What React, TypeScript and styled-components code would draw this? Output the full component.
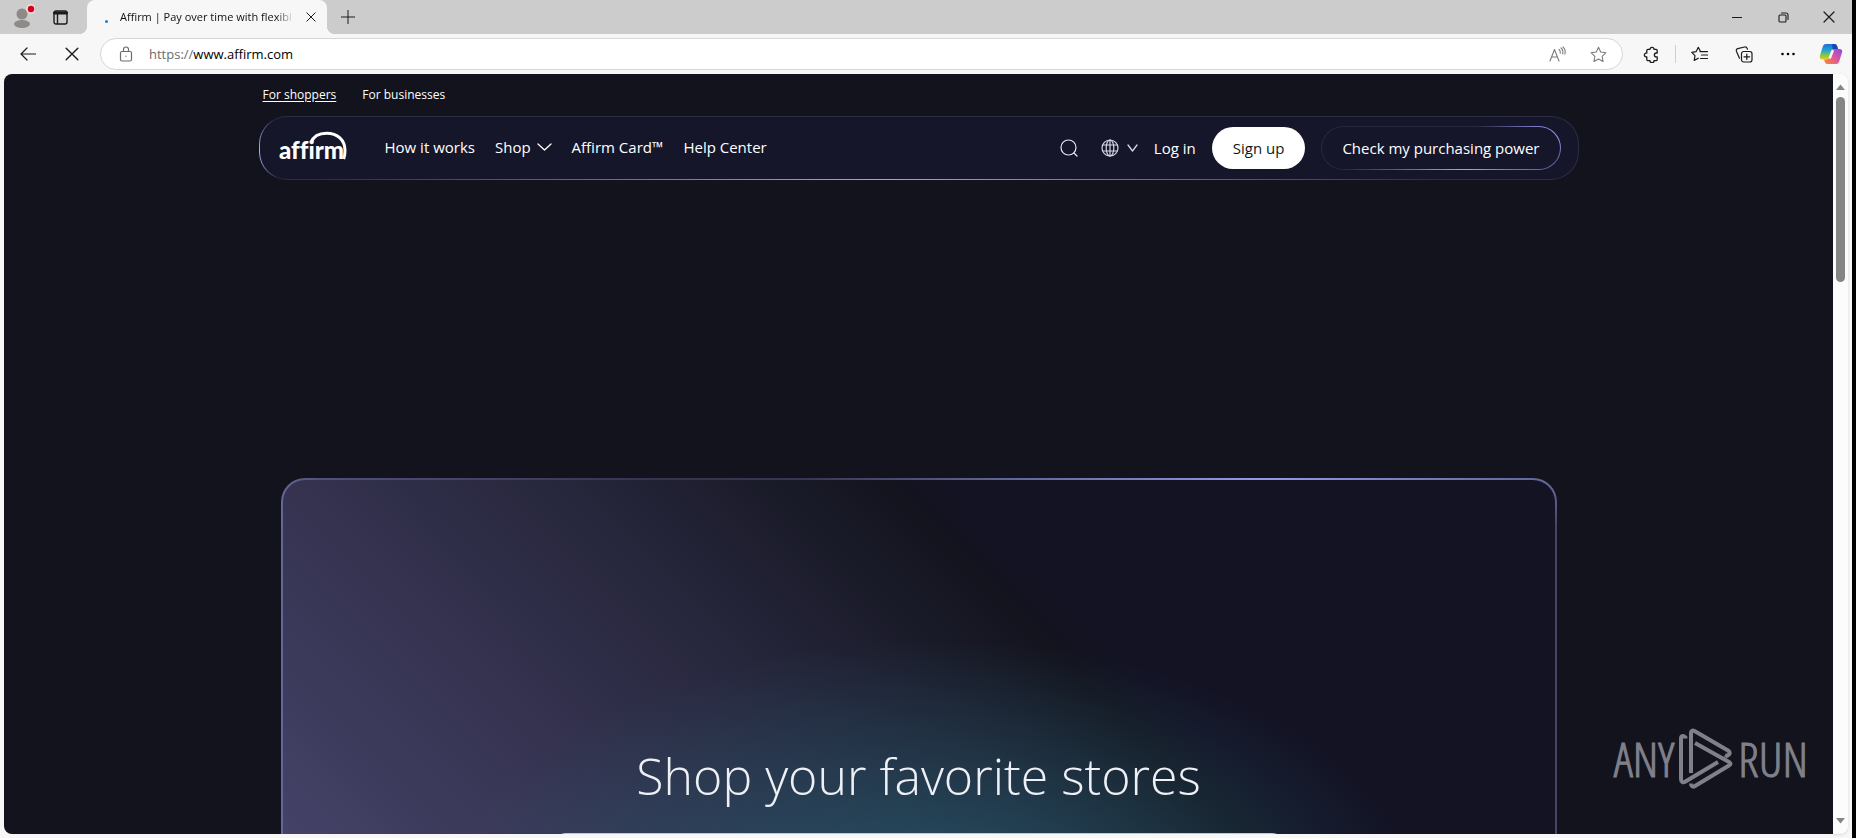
import React from 'react';
import styled, { createGlobalStyle, css } from 'styled-components';

const ui = '"Open Sans", "Noto Sans", sans-serif';

const GlobalStyle = createGlobalStyle`
  *, *::before, *::after { box-sizing: border-box; }
  body { margin: 0; font-family: ${ui}; background: #f7f7f7; }
  button, input { font-family: inherit; }
  a { color: inherit; text-decoration: none; }
`;

/* ---------- Browser frame ---------- */

const Window = styled.div`
  display: flex;
  flex-direction: column;
  height: 100vh;
  border-right: 4px solid #000;
  background: #f7f7f7;
`;

const TitleBar = styled.header`
  display: flex;
  align-items: stretch;
  height: 34px;
  flex: none;
  background: #cccccc;
`;

const IconButton = styled.button<{ $w: number; $tone?: string }>`
  display: flex;
  align-items: center;
  justify-content: center;
  flex: none;
  width: ${p => p.$w}px;
  padding: 0;
  border: 0;
  background: none;
  color: ${p => p.$tone ?? '#1b1b1b'};
`;

const Launcher = styled.div`
  display: flex;
  padding: 0 8px 0 3px;
`;

const Tab = styled.div`
  position: relative;
  display: flex;
  align-items: center;
  width: 240px;
  padding: 0 4px 0 16px;
  border-radius: 8px 8px 0 0;
  background: #f7f7f7;
  &::before, &::after {
    content: '';
    position: absolute;
    bottom: 0;
    width: 8px;
    height: 8px;
  }
  &::before { left: -8px; background: radial-gradient(circle at 0 0, transparent 8px, #f7f7f7 8px); }
  &::after { right: -8px; background: radial-gradient(circle at 100% 0, transparent 8px, #f7f7f7 8px); }
`;

const LoadingDot = styled.span`
  width: 3px;
  height: 3px;
  margin: 8px 12px 0 2px;
  border-radius: 50%;
  background: #2b7cc0;
`;

const TabTitle = styled.span`
  flex: 1;
  overflow: hidden;
  white-space: nowrap;
  font-size: 11px;
  line-height: 16px;
  color: #111;
  mask-image: linear-gradient(90deg, #000 156px, transparent 174px);
`;

const Spacer = styled.div`
  flex: 1;
`;

const Toolbar = styled.div`
  display: flex;
  flex: none;
  height: 40px;
  padding: 4px 0 4px 6px;
`;

const AddressBar = styled.div`
  display: flex;
  flex: 1;
  align-items: center;
  margin: 0 6px;
  padding: 0 4px 0 16px;
  border: 1px solid #d6d6d6;
  border-radius: 16px;
  background: #fff;
`;

const AddressField = styled.label`
  position: relative;
  display: flex;
  flex: 1;
  margin-left: 14px;
  font-size: 13px;
  line-height: 20px;
`;

const AddressInput = styled.input`
  width: 100%;
  padding: 0;
  border: 0;
  outline: 0;
  background: none;
  font-size: 13px;
  line-height: 20px;
  color: transparent;
`;

const AddressText = styled.span`
  position: absolute;
  inset: 0;
  color: #000;
  pointer-events: none;
`;

const Scheme = styled.span`
  color: #6c6c6c;
`;

const ToolbarDivider = styled.span`
  width: 1px;
  height: 18px;
  margin: 7px 2px 0 2px;
  background: #cfcfcf;
`;

const Stage = styled.div`
  display: flex;
  flex: 1;
  min-height: 0;
  padding: 0 4px 4px;
`;

const ScrollTrack = styled.div`
  display: flex;
  flex-direction: column;
  align-items: center;
  width: 15px;
  padding: 10px 0;
  border-radius: 0 8px 8px 0;
  background: #fcfcfc;
  box-shadow: 0 1px 3px #d8d8d8;
  color: #858585;
`;

const ScrollThumb = styled.div`
  width: 9px;
  height: 25%;
  margin-top: 7px;
  border-radius: 5px;
  background: #858585;
`;

/* ---------- Affirm page ---------- */

const Page = styled.main`
  position: relative;
  flex: 1;
  overflow: hidden;
  border-radius: 8px 0 0 8px;
  background: #12131c;
  color: #fff;
`;

const Container = styled.div`
  width: calc(100% - 48px);
  max-width: 1320px;
  margin: 0 auto;
`;

const Audience = styled.nav`
  display: flex;
  gap: 26px;
  height: 42px;
  padding: 13px 4px 0;
`;

const AudienceLink = styled.a<{ $active?: boolean }>`
  font-size: 12px;
  line-height: 16px;
  ${p => p.$active && css`text-decoration: underline; text-underline-offset: 2px;`}
`;

const NavBar = styled.nav`
  display: flex;
  align-items: center;
  height: 64px;
  padding: 0 17px;
  border: 1px solid transparent;
  border-radius: 28px;
  background:
    linear-gradient(#16162b, #16162b) padding-box,
    radial-gradient(28px 34px at 0 55%, #a9b4ff, #9aa5f000) border-box,
    radial-gradient(560px 40px at 47% 100%, #9aa8dc, #9aa8dc00) border-box,
    linear-gradient(#2c2c42, #2c2c42) border-box;
`;

const NavLinks = styled.div`
  display: flex;
  align-items: center;
  gap: 20px;
  margin-left: 36px;
  padding-bottom: 2px;
`;

const NavLink = styled.a`
  font-size: 15px;
  font-weight: 500;
  line-height: 20px;
  white-space: nowrap;
`;

const NavMenu = styled.button`
  display: flex;
  align-items: center;
  gap: 6px;
  padding: 0;
  border: 0;
  background: none;
  color: #fff;
  font-size: 15px;
  font-weight: 500;
  line-height: 20px;
`;

const LanguageMenu = styled(NavMenu)`
  gap: 8px;
  color: #d4d6e2;
`;

const NavActions = styled.div`
  display: flex;
  align-items: center;
  gap: 16px;
  margin-left: auto;
`;

const LogIn = styled.a`
  font-size: 15px;
  line-height: 20px;
  white-space: nowrap;
`;

const PillButton = styled.button<{ $solid?: boolean }>`
  height: ${p => (p.$solid ? 42 : 44)}px;
  padding: 0 20px;
  border: 1px solid transparent;
  border-radius: 22px;
  font-size: 15px;
  line-height: 20px;
  white-space: nowrap;
  ${p => p.$solid
    ? css`background: #fff; color: #101820;`
    : css`
      color: #fff;
      background:
        linear-gradient(#16162b, #16162b) padding-box,
        radial-gradient(76px 46px at 96% 22%, #a09cff, #8a86e800) border-box,
        radial-gradient(120px 16px at 60% 100%, #a8a8cc, #9a9ac000) border-box,
        linear-gradient(#26263c, #26263c) border-box;
    `}
`;

const Hero = styled.section`
  display: flex;
  flex-direction: column;
  align-items: center;
  min-height: 600px;
  margin: 298px 22px 0;
  padding: 266px 24px 0;
  border: 2px solid transparent;
  border-radius: 24px;
  background:
    radial-gradient(490px 270px at 51% 430px, #24586acc, #24586a99 30%, #24586a00) padding-box,
    linear-gradient(45deg, #4a476e 5%, #444267 13%, #353350 32%, #25253a 48%, #13141e 64%, #131324 67%) padding-box,
    radial-gradient(460px 60px at 77% 0, #949ae6, #949ae600) border-box,
    linear-gradient(90deg, #65679a 0, #50517c 3%, #34344f 30%, #454568 100%) border-box;
`;

const HeroTitle = styled.h1`
  margin: 0;
  font-size: 50px;
  font-weight: 300;
  line-height: 60px;
  text-align: center;
  color: #eef0f6;
`;

const StoreSearch = styled.input`
  width: 100%;
  max-width: 730px;
  height: 64px;
  margin-top: 27px;
  padding: 0 24px;
  border: 0;
  border-radius: 12px;
  background: #c8c6ca;
`;

const Watermark = styled.div`
  position: absolute;
  right: 25px;
  bottom: 44px;
  display: flex;
  align-items: center;
  gap: 4px;
  color: #80808b;
  font-family: "Open Sans Condensed Light", "Open Sans Condensed", "Liberation Sans Narrow", sans-serif;
  font-size: 48px;
  font-weight: 300;
  line-height: 62px;
  -webkit-text-stroke: 1px currentColor;
`;

/* ---------- Icons ---------- */

type LineProps = { w: number; h?: number; box: string; sw?: number; children: React.ReactNode };
const Line = ({ w, h = w, box, sw = 1, children }: LineProps) => (
  <svg width={w} height={h} viewBox={box} fill="none" stroke="currentColor" strokeWidth={sw} strokeLinecap="round" strokeLinejoin="round" aria-hidden="true">
    {children}
  </svg>
);

const Profile = () => (
  <svg width="26" height="26" viewBox="0 0 26 26" aria-hidden="true">
    <circle cx="13" cy="10" r="5.5" fill="#8d8a88" />
    <ellipse cx="13" cy="20" rx="8" ry="4" fill="#8d8a88" />
    <circle cx="22" cy="5" r="5" fill="#f3d5d8" />
    <circle cx="22" cy="5" r="3.2" fill="#d0021b" />
  </svg>
);

const Workspaces = () => (
  <Line w={15} box="0 0 15 15" sw={1.4}>
    <rect x="1" y="1" width="13" height="13" rx="2" />
    <path d="M1.5 3h12" strokeWidth="3" />
    <path d="M4.5 4v9.5" />
  </Line>
);

const Cross = ({ size }: { size: number }) => (
  <Line w={size} box="0 0 12 12" sw={1.2}><path d="M1 1l10 10M11 1L1 11" /></Line>
);

const ChevronDown = ({ w }: { w: number }) => (
  <Line w={w} h={8} box={`0 0 ${w} 8`} sw={1.3}><path d={`M1 1l${w / 2 - 1} 6L${w - 1} 1`} /></Line>
);

const ReadAloud = () => (
  <Line w={18} h={16} box="0 0 18 16" sw={1.1}>
    <path d="M1 15L5.500 3.500 10 15M2.600 11h5.900M10 3.500c1.200.9 1.500 2.200 1.300 3.700M12 1.800c1.700 1.500 2.200 3.600 1.700 6M14 .8c2 2 2.600 4.600 1.900 7.400" />
  </Line>
);

const starPath = 'M8 1.200l2.100 4.500 4.900.6-3.600 3.400.9 4.900L8 12.200l-4.300 2.400.9-4.900L1 6.300l4.900-.6z';

const Puzzle = () => (
  <Line w={17} box="0 0 17 17" sw={1.300}>
    <path d="M5 3.300h2a2 2 0 1 1 4 0h2a1.200 1.200 0 0 1 1.200 1.200V7h-.9a1.900 1.900 0 1 0 0 3.800h.9v2.700a1.200 1.200 0 0 1-1.200 1.200h-2a2 2 0 0 1-4 0H5a1.200 1.200 0 0 1-1.200-1.200v-2.600a2 2 0 1 1 0-3.900V4.500A1.200 1.200 0 0 1 5 3.300z" />
  </Line>
);

const FavoritesList = () => (
  <Line w={18} h={17} box="0 0 18 17" sw={1.2}>
    <path d="M9.500 5.500L7.300 1.300 5.200 5.600.8 6.300 4 9.600l-.8 4.800L7.300 12.200M9 5.600h7.500M10.500 9h6M9.500 12.500h7" />
  </Line>
);

const Collections = () => (
  <Line w={18} h={17} box="0 0 18 17" sw={1.2}>
    <rect x="6.500" y="5.500" width="10.500" height="10.500" rx="2.200" />
    <path d="M11.800 8v5.500M9 10.800h5.600M4.500 12.200L1.500 5.500C1 4.200 1.300 3 2.800 2.600L9.500 1c1.200-.2 2.200.3 2.700 1.400l.3.800" />
  </Line>
);

const Copilot = () => (
  <svg width="24" height="22" viewBox="0 0 24 22" aria-hidden="true">
    <defs>
      <linearGradient id="cpA" x1="0" y1="0" x2="0" y2="1">
        <stop offset="0" stopColor="#1e6fd9" /><stop offset=".45" stopColor="#25a9c9" /><stop offset=".7" stopColor="#7cc64a" /><stop offset="1" stopColor="#f5c518" />
      </linearGradient>
      <linearGradient id="cpB" x1="1" y1="0" x2="0" y2="1">
        <stop offset="0" stopColor="#8a4be8" /><stop offset=".5" stopColor="#e0569c" /><stop offset="1" stopColor="#ff8a2a" />
      </linearGradient>
    </defs>
    <path d="M7 1h8.500c1.500 0 2.300 1 2.700 2.300l.8 2.700h-3c-2 0-3 1-3.500 2.700L11 14c-.6 1.800-1.500 2.500-3 2.500H3.500C1.200 16.500.3 14.800 1 12.500l2.800-9C4.400 1.800 5.400 1 7 1z" fill="url(#cpA)" />
    <path d="M13 1h2.500c1.500 0 2.300 1 2.700 2.300L19 6h-3c-1 0-1.700.2-2.200.7z" fill="#1a45b8" />
    <path d="M17 21H8.500c-1.500 0-2.300-1-2.700-2.300L5 16.500h3c1.500 0 2.400-.7 3-2.500l1.500-5.300C13 7 14 6 16 6h4.500c2.300 0 3.200 1.200 2.500 3.500l-2.800 9C19.600 20.200 18.600 21 17 21z" fill="url(#cpB)" />
    <path d="M13.500 8l-2.500 6.500" stroke="#f7f7f7" strokeWidth="2.500" strokeLinecap="round" />
  </svg>
);

const Globe = () => (
  <Line w={18} box="0 0 18 18" sw={1.2}>
    <circle cx="9" cy="9" r="8" /><ellipse cx="9" cy="9" rx="3.800" ry="8" />
    <path d="M9 1v16M1.800 6h14.400M1.800 12h14.400" />
  </Line>
);

const LogoText = styled.text`
  font-family: Lato, sans-serif;
  font-size: 24px;
  font-weight: 900;
  font-variant-ligatures: none;
`;

const AffirmLogo = () => (
  <svg width="72" height="40" viewBox="0 -4 72 40" role="img" aria-label="Affirm">
    <LogoText x="2" y="29" fill="#fff">affirm</LogoText>
    <path d="M34 12.500C36.500 6 42.500 3.200 49.500 3.200 60.500 3.200 68 10 68 20.500c0 3.200-.5 6-1.300 8.500" fill="none" stroke="#fff" strokeWidth="3" />
  </svg>
);

const PlayMark = () => (
  <svg width="56" height="62" viewBox="0 0 56 62" fill="none" stroke="currentColor" strokeWidth="4" strokeLinejoin="round" aria-hidden="true">
    <path d="M7.500 10.500V9.500C5 7 3 8 3 10.500V51c0 3 2 4 4.500 2.500L40 34" />
    <path d="M13 45V5c0-2.500 1.500-3 3.500-2L50 22.500c3 2 1.500 4.500-1 5.500l-2-1" />
    <path d="M17 15l34 19c2 1.200 2 2.500 0 3.500L17 58c-2.500 1.500-4 0-4-2.500" />
  </svg>
);

export default function App() {
  return (
    <Window>
      <GlobalStyle />
      <TitleBar>
        <Launcher>
          <IconButton $w={38} aria-label="Profile"><Profile /></IconButton>
          <IconButton $w={38} aria-label="Tab actions"><Workspaces /></IconButton>
        </Launcher>
        <Tab>
          <LoadingDot />
          <TabTitle>Affirm | Pay over time with flexibl</TabTitle>
          <IconButton $w={24} aria-label="Close tab"><Cross size={10} /></IconButton>
        </Tab>
        <IconButton $w={42} aria-label="New tab">
          <Line w={14} box="0 0 14 14"><path d="M7 0v14M0 7h14" /></Line>
        </IconButton>
        <Spacer />
        <IconButton $w={46} aria-label="Minimize">
          <Line w={10} h={3} box="0 0 10 3" sw={1.2}><path d="M0 1.500h10" /></Line>
        </IconButton>
        <IconButton $w={46} aria-label="Restore">
          <Line w={11} box="0 0 11 11" sw={1.1}>
            <rect x="1" y="3" width="7" height="7" rx="1" /><path d="M3.500 1h4.500c1.200 0 2 .8 2 2v4.500" />
          </Line>
        </IconButton>
        <IconButton $w={46} aria-label="Close"><Cross size={12} /></IconButton>
      </TitleBar>

      <Toolbar>
        <IconButton $w={44} aria-label="Back">
          <Line w={16} h={14} box="0 0 16 14" sw={1.2}><path d="M7 1L1 7l6 6M1 7h14.500" /></Line>
        </IconButton>
        <IconButton $w={44} aria-label="Stop"><Cross size={14} /></IconButton>
        <AddressBar>
          <IconButton $w={18} $tone="#6c6c6c" aria-label="Site information">
            <Line w={14} h={16} box="0 0 14 16" sw={1.2}>
              <rect x="1.500" y="5.500" width="11" height="9.500" rx="1.500" />
              <path d="M4.500 5.500V3.500a2.500 2.500 0 0 1 5 0v2M7 10v.3" />
            </Line>
          </IconButton>
          <AddressField>
            <AddressInput aria-label="Address" />
            <AddressText><Scheme>https://</Scheme>www.affirm.com</AddressText>
          </AddressField>
          <IconButton $w={40} $tone="#7a7a7a" aria-label="Read aloud"><ReadAloud /></IconButton>
          <IconButton $w={40} $tone="#7a7a7a" aria-label="Add to favorites">
            <Line w={17} box="0 0 16 16"><path d={starPath} /></Line>
          </IconButton>
        </AddressBar>
        <IconButton $w={44} aria-label="Extensions"><Puzzle /></IconButton>
        <ToolbarDivider />
        <IconButton $w={44} aria-label="Favorites"><FavoritesList /></IconButton>
        <IconButton $w={44} aria-label="Collections"><Collections /></IconButton>
        <IconButton $w={44} aria-label="More">
          <svg width="14" height="4" viewBox="0 0 14 4" aria-hidden="true">
            <circle cx="1.500" cy="2" r="1.300" /><circle cx="7" cy="2" r="1.300" /><circle cx="12.500" cy="2" r="1.300" />
          </svg>
        </IconButton>
        <IconButton $w={42} aria-label="Copilot"><Copilot /></IconButton>
      </Toolbar>

      <Stage>
        <Page>
          <Container>
            <Audience aria-label="Audience">
              <AudienceLink href="#shoppers" $active>For shoppers</AudienceLink>
              <AudienceLink href="#businesses">For businesses</AudienceLink>
            </Audience>
            <NavBar aria-label="Main">
              <a href="#home"><AffirmLogo /></a>
              <NavLinks>
                <NavLink href="#how">How it works</NavLink>
                <NavMenu>Shop <ChevronDown w={15} /></NavMenu>
                <NavLink href="#card">Affirm Card™</NavLink>
                <NavLink href="#help">Help Center</NavLink>
              </NavLinks>
              <NavActions>
                <IconButton $w={32} $tone="#e6e7ee" aria-label="Search">
                  <Line w={18} box="0 0 18 18" sw={1.2}><circle cx="8.500" cy="8.500" r="7.500" /><path d="M14 14l3 3" /></Line>
                </IconButton>
                <LanguageMenu aria-label="Language"><Globe /><ChevronDown w={11} /></LanguageMenu>
                <LogIn href="#login">Log in</LogIn>
                <PillButton $solid>Sign up</PillButton>
                <PillButton>Check my purchasing power</PillButton>
              </NavActions>
            </NavBar>
            <Hero>
              <HeroTitle>Shop your favorite stores</HeroTitle>
              <StoreSearch type="search" aria-label="Search stores" />
            </Hero>
          </Container>
          <Watermark>
            <span>ANY</span>
            <PlayMark />
            <span>RUN</span>
          </Watermark>
        </Page>
        <ScrollTrack>
          <svg width="9" height="6" viewBox="0 0 9 6" aria-hidden="true"><path d="M0 6l4.500-5.500L9 6z" fill="currentColor" /></svg>
          <ScrollThumb />
          <Spacer />
          <svg width="9" height="6" viewBox="0 0 9 6" aria-hidden="true"><path d="M0 0l4.500 5.500L9 0z" fill="currentColor" /></svg>
        </ScrollTrack>
      </Stage>
    </Window>
  );
}
